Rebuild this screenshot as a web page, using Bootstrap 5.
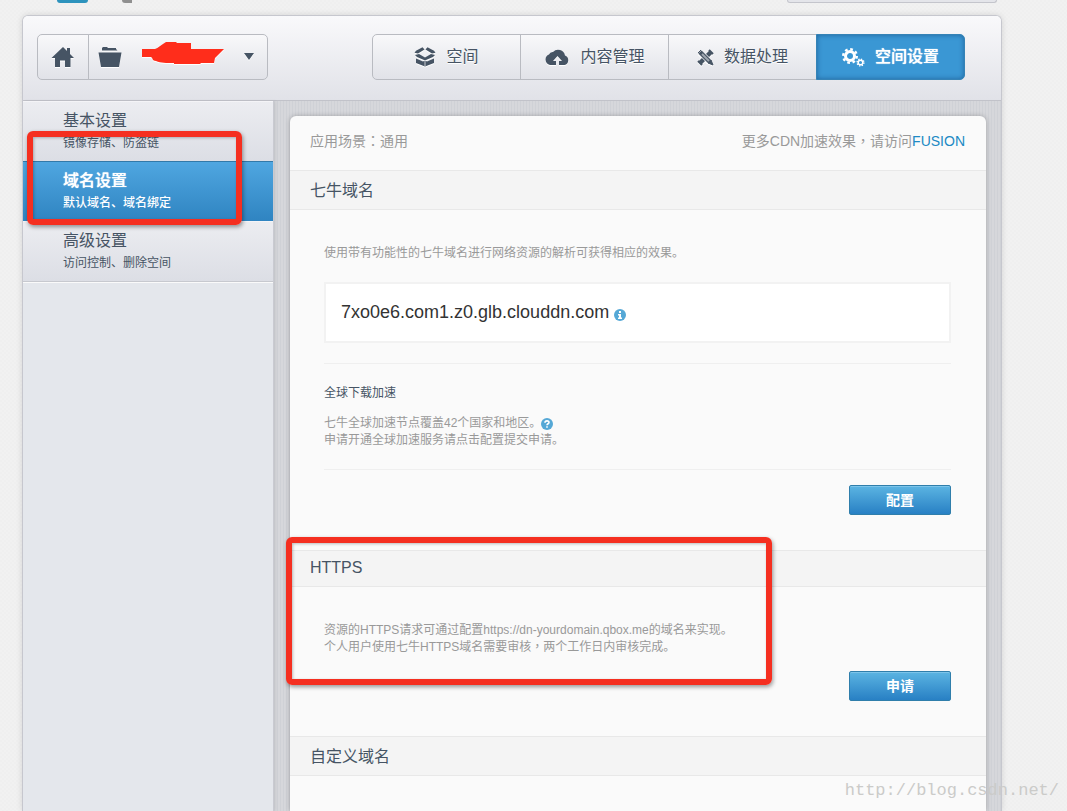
<!DOCTYPE html>
<html lang="zh-CN">
<head>
<meta charset="utf-8">
<meta name="viewport" content="width=device-width, initial-scale=1">
<title>空间设置</title>
<link href="https://cdn.jsdelivr.net/npm/bootstrap@5.3.0/dist/css/bootstrap.min.css" rel="stylesheet">
<style>
:root{--ink:#465464;--line:#b9bbc1}
body{font-family:"Liberation Sans","Noto Sans CJK SC",sans-serif;font-size:12px;line-height:17px;color:#999;overflow:hidden;
  background:repeating-conic-gradient(#f1f1f1 0 25%,#efefef 0 50%) 0 0/4px 4px}
.page-wrap{padding:0 65px 0 22px}
.top-strip{height:15px;padding:0 5px 0 35px}
.logo-end{width:31px;height:3px;background:#2d93bd;border-radius:0 0 6px 6px}
.glyph-end{width:10px;height:3px;margin-left:34px;background:#909090;border-radius:0 0 0 6px}
.menu-end{width:210px;height:3px;background:#e4e5ea;border:1px solid #c4c5cc;border-top:0;border-radius:0 0 5px 5px}
.frame{border:1px solid #c6c7ce;border-bottom:0;border-radius:6px 6px 0 0;box-shadow:0 0 6px rgba(0,0,0,.12);height:calc(100vh - 15px);overflow:hidden}
.frame-head{padding:18px 36px 20px 14px;background:linear-gradient(#f9f9fb,#e1e2e8);border-bottom:1px solid #c1c2c9}
.tool-btn{--bs-btn-padding-x:0;--bs-btn-padding-y:0;--bs-btn-border-radius:5px;--bs-btn-color:var(--ink);--bs-btn-border-color:var(--line);
  --bs-btn-hover-color:var(--ink);--bs-btn-hover-border-color:var(--line);--bs-btn-font-size:16px;
  height:46px;background:linear-gradient(#f8f8fa,#e1e2e8);display:flex;align-items:center;justify-content:center;text-shadow:0 1px 0 #fff}
.tool-btn svg{filter:drop-shadow(0 1px 0 #fff)}
.btn-home{width:52px}
.btn-space{width:180px;justify-content:flex-start;padding-left:9px}
.tabs-main .tool-btn{width:149px;gap:10px}
.tool-btn.tab-on{background:#3a97d4;border-color:#3583b6;color:#fff;text-shadow:0 0 1px #fff;font-weight:500;box-shadow:inset 0 0 5px rgba(0,40,90,.45)}
.tab-on svg{filter:none}
.side{width:251px;flex:none;background:#e4e7ec;border-right:1px solid #c9cad1;box-shadow:2px 0 3px rgba(0,0,0,.06)}
.side-item{height:60px;padding:8px 0 0 40px;border:0;border-radius:0;background:linear-gradient(#ecedf1,#dcdee5);color:var(--ink);box-shadow:inset 0 1px 0 #f4f4f7}
.side-item strong{display:block;font-size:16px;font-weight:400;line-height:24px}
.side-item span{display:block;line-height:20px}
.side-item.side-on{background:linear-gradient(#50a7e1,#2f84c1);color:#fff;font-weight:500;box-shadow:inset 0 1px 0 #3279a9}
.side-item.side-on strong{font-weight:500;text-shadow:0 0 1px #fff}
.side .list-group{border-bottom:1px solid #c7c9cf;box-shadow:0 1px 0 #fafafa}
.gutter{padding:15px 15px 0 16px;background:repeating-linear-gradient(90deg,#cfd1d6 0 1px,#d6d7db 1px 3px)}
.panel{--bs-card-bg:#fafafa;--bs-card-border-width:0;--bs-card-border-radius:6px;--bs-card-color:#999;box-shadow:0 0 5px rgba(0,0,0,.25);height:100%;border-radius:6px 6px 0 0}
.scene{height:54px;padding:0 21px 4px 20px;font-size:14px}
.scene a{color:#2089c4;text-decoration:none}
.sec-head{height:40px;margin:0;padding-left:20px;background:#f4f4f4;border:solid #e8e8e8;border-width:1px 0;color:var(--ink);font-size:16px;line-height:40px;font-weight:400}
.sec-slim{height:37px;line-height:34px}
.sec-body{padding:35px 35px 35px 34px}
.domain-box{height:61px;margin-top:20px;padding-left:15px;background:#fff;border:2px solid #f2f2f2;color:#333;font-size:18px;gap:5px}
.rule{margin:20px 0 0;border-top:1px solid #d0d0d0}
.sub-title{margin:21px 0 13px;font-size:12px;line-height:17px;color:var(--ink);font-weight:400}
.act-row{padding-top:15px}
.btn-act{width:102px;height:30px;padding:0;border:1px solid #2f7eab;border-radius:2px;background:linear-gradient(#5bb4e2,#2880c4);box-shadow:inset 0 1px 0 #7cc4ea;color:#fff;font-size:14px;line-height:28px;font-weight:700}
.mid{font-family:"Noto Sans CJK TC",sans-serif;line-height:1}
.callout{position:absolute;border:6px solid #f52f20;border-radius:6px;box-shadow:1px 2px 4px rgba(0,0,0,.4),inset 1px 1px 3px rgba(0,0,0,.25);pointer-events:none;z-index:3}
.callout-side{left:4px;top:30px;width:215px;height:94px}
.callout-https{left:-4px;top:421px;width:486px;height:148px}
.stamp{position:absolute;right:8px;bottom:8px;font:17px/24px "Liberation Mono",monospace;color:#cbcbc9;z-index:4}
</style>
</head>
<body>
<div class="page-wrap">
  <div class="top-strip d-flex align-items-start">
    <div class="logo-end"></div><div class="glyph-end"></div><div class="menu-end ms-auto"></div>
  </div>
  <div class="frame d-flex flex-column">
    <header class="frame-head d-flex justify-content-between">
      <div class="btn-group">
        <button class="btn tool-btn btn-home flex-grow-0" type="button" aria-label="首页">
          <svg width="24" height="22" viewBox="0 0 24 22" fill="#465464"><path d="M12 1 0.500 12h3.500v9h5v-6.500h5V21h5.500v-9H23l-4-4V2h-3v3z"/></svg>
        </button>
        <button class="btn tool-btn btn-space flex-grow-0" type="button" aria-label="选择空间">
          <svg width="24" height="22" viewBox="0 0 24 22" fill="#465464"><path d="M4 4.500V2l1-1h4l1 1h8v1l1.500 1.500zM0.500 6.500h23L21 21H3z"/></svg>
          <svg class="ms-3 me-3" width="90" height="30" viewBox="0 0 90 30"><path fill="#ff2d1b" d="M4 7h13c3-1 6-4 11-7h10l1 1h14v6h33l-9 9-1 5H63l-1 1H36v-1c-8 0-13 0-18-2-4 0-3-3-5-4H4z"/></svg>
          <svg width="10" height="8" viewBox="0 0 10 8" fill="#465464"><path d="M0 0h10L5 7z"/></svg>
        </button>
      </div>
      <nav class="btn-group tabs-main">
        <button class="btn tool-btn" type="button">
          <svg width="22" height="20" viewBox="0 0 22 20" fill="#465464"><path d="M2 3.800 8.500.3l2 2.300L4 6.500.5 5.700zM20 3.800 13.500.3l-2 2.300L18 6.500l3.500-.8zM1 8l4-1 6 3.500L17 7l4 1-2 2-7 3h-2L3 10zM2 11.500l7 3 2-1 2 1 7-3v4.500l-9 3.500-9-3.500z"/><path d="M11 14v5" stroke="#c7cad0"/></svg>空间</button>
        <button class="btn tool-btn" type="button">
          <svg width="26" height="18" viewBox="0 0 26 18" fill="#465464"><path d="M6 17a5.500 5.500 0 0 1-1-10.500A4 4 0 0 1 9 4a7 7 0 0 1 12 3.500A5 5 0 0 1 20.500 17H15v-4h3l-4.500-5L9 13h3v4z"/></svg>内容管理</button>
        <button class="btn tool-btn" type="button">
          <svg width="17" height="17" viewBox="0 0 17 17"><path d="M3 14 14 3" stroke="#465464" stroke-width="4.500"/><path d="m1 12 4 4M12 1l4 4" stroke="#465464" stroke-width="2"/><path d="m3 3 9 9" stroke="#e9eaee" stroke-width="6"/><path d="m3 3 10 10" stroke="#465464" stroke-width="4.500"/><path d="m5 5 7 7" stroke="#a0a7b0" stroke-width="2"/><path d="m1 4 3-3M11 14l3-3 2 5z" fill="#465464" stroke="#465464"/></svg>数据处理</button>
        <button class="btn tool-btn tab-on" type="button" aria-current="page">
          <svg width="23" height="20" viewBox="0 0 23 20" fill="none" stroke="#fff"><circle cx="8" cy="9" r="4.500" stroke-width="3"/><circle cx="8" cy="9" r="6.800" stroke-width="2.400" stroke-dasharray="2.700 2.640"/><circle cx="18.500" cy="15.500" r="2.300" stroke-width="1.500"/><circle cx="18.500" cy="15.500" r="3.400" stroke-width="1.400" stroke-dasharray="1.350 1.320"/></svg>空间设置</button>
      </nav>
    </header>
    <div class="d-flex flex-grow-1">
      <aside class="side position-relative">
        <div class="list-group list-group-flush">
          <a href="#" class="list-group-item side-item"><strong>基本设置</strong><span>镜像存储、防盗链</span></a>
          <a href="#" class="list-group-item side-item side-on"><strong>域名设置</strong><span>默认域名、域名绑定</span></a>
          <a href="#" class="list-group-item side-item"><strong>高级设置</strong><span>访问控制、删除空间</span></a>
        </div>
        <div class="callout callout-side"></div>
      </aside>
      <main class="gutter flex-grow-1">
        <div class="card panel position-relative">
          <div class="scene d-flex justify-content-between align-items-center">
            <span>应用场景<span class="mid" lang="zh-TW">：</span>通用</span>
            <span>更多CDN加速效果<span class="mid" lang="zh-TW">，</span>请访问<a href="#">FUSION</a></span>
          </div>
          <h2 class="sec-head">七牛域名</h2>
          <section class="sec-body">
            <p class="mb-0">使用带有功能性的七牛域名进行网络资源的解析可获得相应的效果。</p>
            <div class="domain-box d-flex align-items-center">7xo0e6.com1.z0.glb.clouddn.com
              <svg class="mt-1" width="12" height="12" viewBox="0 0 12 12"><circle cx="6" cy="6" r="6" fill="#55a8d6"/><path fill="#fff" d="M5 2h2v2H5zM4 5h3v3.500h1V10H4V8.500h1v-2H4z"/></svg>
            </div>
            <hr class="rule">
            <h3 class="sub-title">全球下载加速</h3>
            <p class="mb-0">七牛全球加速节点覆盖42个国家和地区。<svg width="12" height="12" viewBox="0 0 12 12"><circle cx="6" cy="6" r="6" fill="#55a8d6"/><path fill="none" stroke="#fff" stroke-width="1.600" d="M4 4.800C4 2.300 8 2.300 8 4.400 8 5.800 6 5.700 6 7.300M6 8.200v1.600"/></svg><br>申请开通全球加速服务请点击配置提交申请。</p>
            <hr class="rule">
            <div class="act-row d-flex justify-content-end"><button class="btn btn-act" type="button">配置</button></div>
          </section>
          <h2 class="sec-head sec-slim">HTTPS</h2>
          <section class="sec-body">
            <p class="mb-0">资源的HTTPS请求可通过配置https://dn-yourdomain.qbox.me的域名来实现。<br>个人用户使用七牛HTTPS域名需要审核<span class="mid" lang="zh-TW">，</span>两个工作日内审核完成。</p>
            <div class="act-row d-flex justify-content-end"><button class="btn btn-act" type="button">申请</button></div>
          </section>
          <h2 class="sec-head">自定义域名</h2>
          <div class="callout callout-https"></div>
        </div>
      </main>
    </div>
  </div>
</div>
<div class="stamp">http://blog.csdn.net/</div>
<script src="https://cdn.jsdelivr.net/npm/bootstrap@5.3.0/dist/js/bootstrap.bundle.min.js"></script>
</body>
</html>
